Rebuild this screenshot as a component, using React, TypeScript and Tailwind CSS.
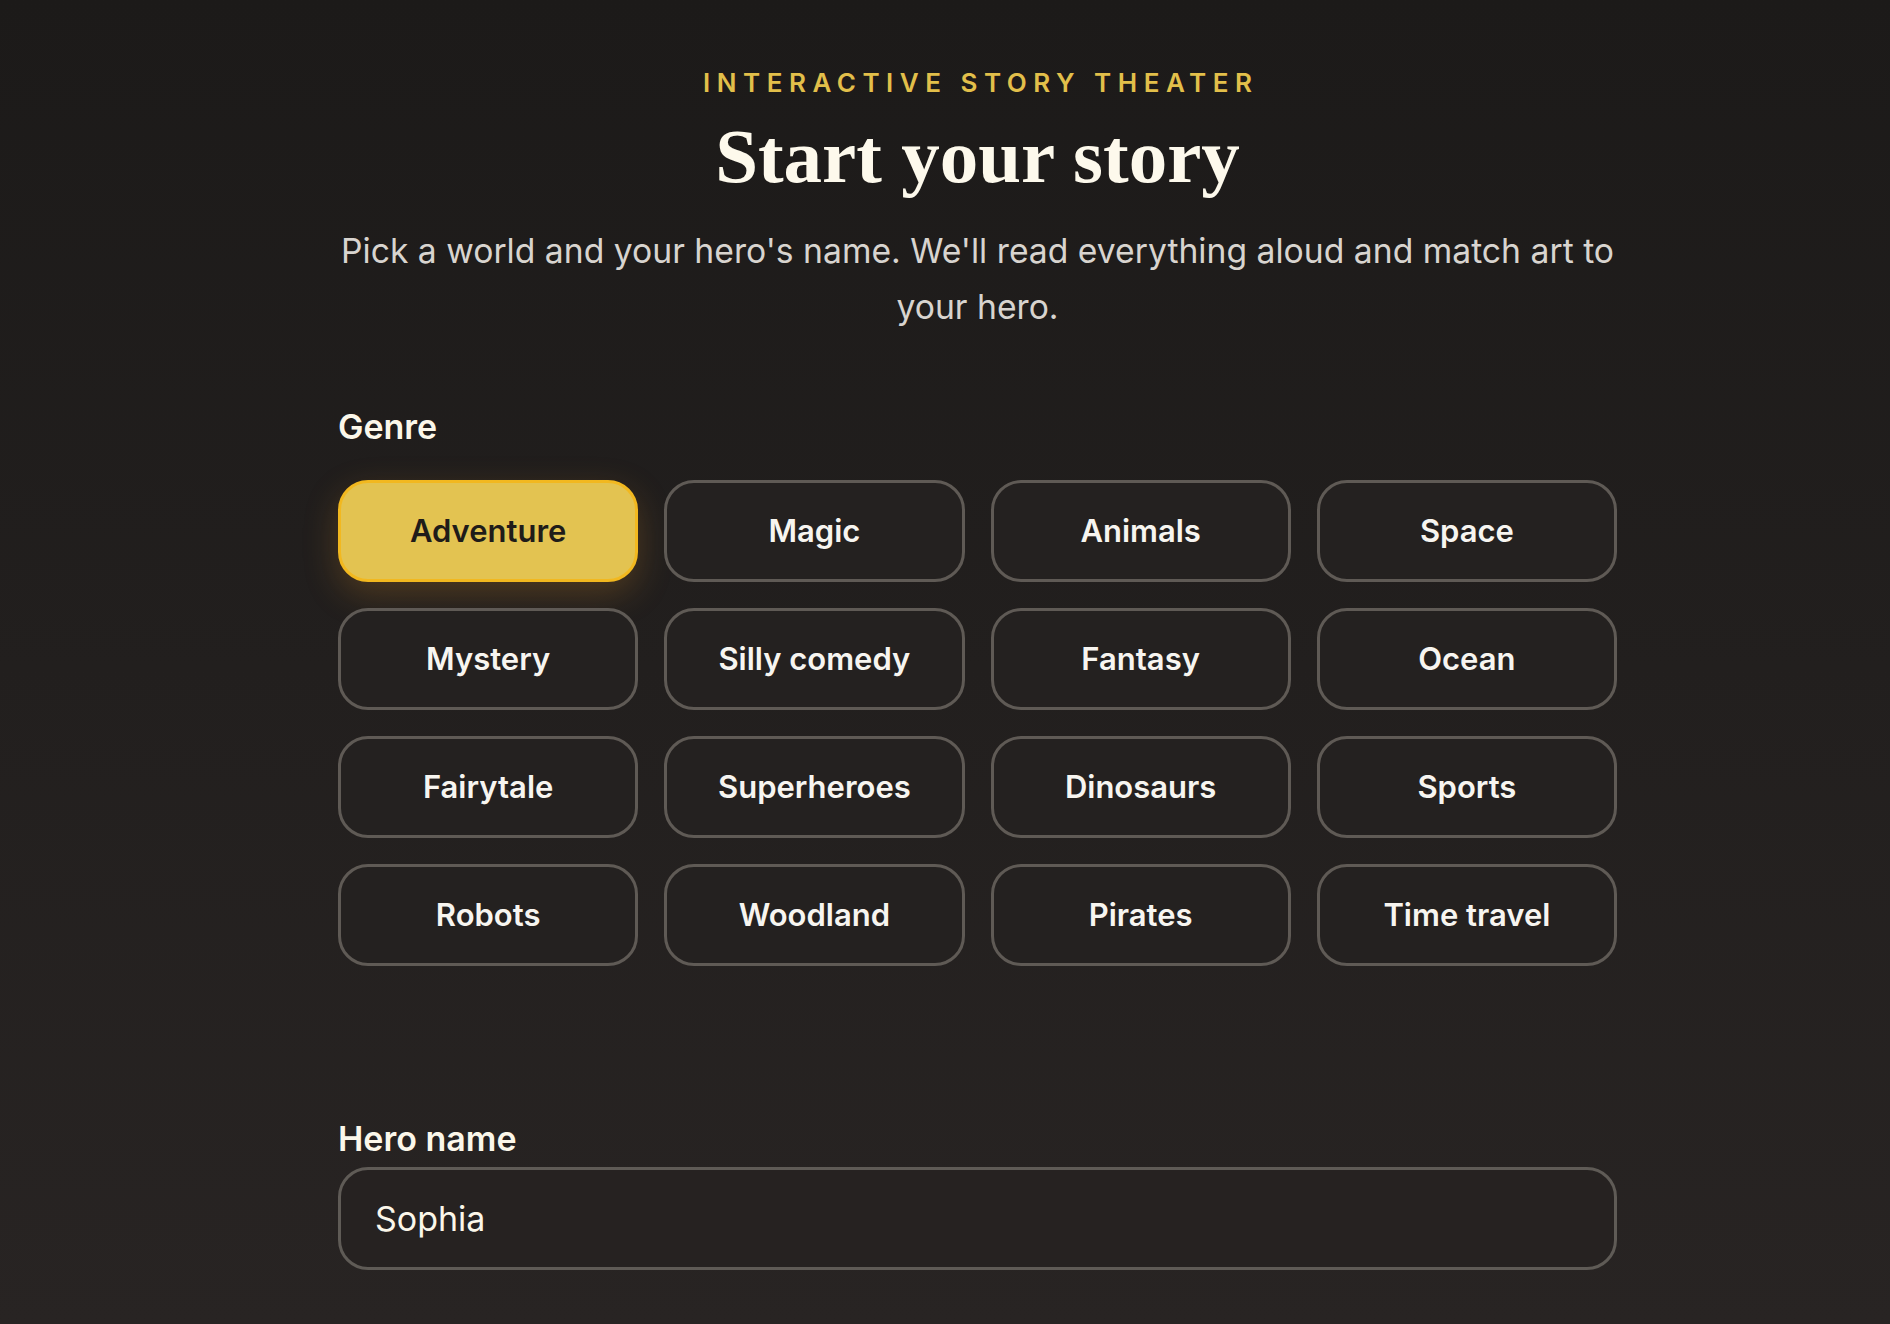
import { useState } from 'react';

const GENRES = [
  'Adventure',
  'Magic',
  'Animals',
  'Space',
  'Mystery',
  'Silly comedy',
  'Fantasy',
  'Ocean',
  'Fairytale',
  'Superheroes',
  'Dinosaurs',
  'Sports',
  'Robots',
  'Woodland',
  'Pirates',
  'Time travel',
];

const sans = { fontFamily: 'Inter, "Noto Sans", "Liberation Sans", sans-serif' };

export default function App() {
  const [genre, setGenre] = useState('Adventure');
  const [hero, setHero] = useState('Sophia');

  return (
    <div
      className="min-h-screen w-full bg-gradient-to-b from-[#1c1a19] to-[#282423] flex justify-center pl-[65px]"
      style={sans}
    >
      <div className="w-[1279px] flex flex-col pt-[67px]">
        <p className="text-center text-[26px] leading-[32px] font-semibold tracking-[0.25em] pl-[0.25em] text-[#e2bf4a] uppercase">
          Interactive Story Theater
        </p>
        <h1
          className="mt-[19px] text-center text-[77px] leading-[77px] font-bold text-[#fdf9ec]"
          style={{ fontFamily: '"Liberation Serif", "DejaVu Serif", serif' }}
        >
          Start your story
        </h1>
        <p className="mt-[28px] text-center text-[33.7px] leading-[56px] text-[#d8d4cf]">
          Pick a world and your hero's name. We'll read everything aloud and match art to your
          hero.
        </p>

        <h2 className="mt-[72px] text-[34px] leading-[40px] font-semibold text-[#fbf7ea]">Genre</h2>
        <div className="mt-[33px] grid grid-cols-4 gap-[26px]">
          {GENRES.map((g) => {
            const active = g === genre;
            return (
              <button
                key={g}
                onClick={() => setGenre(g)}
                className={
                  active
                    ? 'h-[102px] rounded-[30px] border-[3px] border-[#f2b81f] bg-[#e3c351] text-[31px] font-semibold text-[#1f1c19] shadow-[0_12px_34px_rgba(214,140,40,0.25)]'
                    : 'h-[102px] rounded-[30px] border-[3px] border-[#5f5a55] bg-[#242120] text-[31px] font-semibold text-[#f7f5f0] hover:border-[#7a746e] transition-colors'
                }
              >
                {g}
              </button>
            );
          })}
        </div>

        <label htmlFor="hero" className="mt-[153px] text-[34px] leading-[40px] font-semibold text-[#fbf7ea]">
          Hero name
        </label>
        <input
          id="hero"
          value={hero}
          onChange={(e) => setHero(e.target.value)}
          className="mt-[8px] h-[103px] rounded-[30px] border-[3px] border-[#5f5b56] bg-[#262221] px-[34px] text-[34px] text-[#fbf7ea] outline-none"
          style={sans}
        />
      </div>
    </div>
  );
}
